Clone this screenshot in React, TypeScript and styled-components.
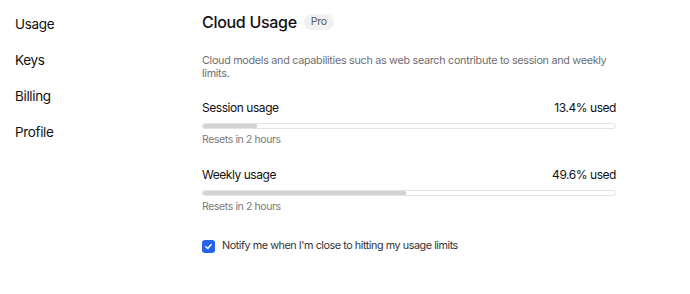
import React from "react";
import styled, { createGlobalStyle } from "styled-components";

const Global = createGlobalStyle`
  html, body { margin: 0; padding: 0; background: #fff; }
  body { font-family: Inter, "Noto Sans", sans-serif; color: #1d1d1f; -webkit-font-smoothing: antialiased; }
`;

const Page = styled.div`
  display: flex;
  width: 690px;
  height: 294px;
  box-sizing: border-box;
`;

const Sidebar = styled.nav`
  width: 202px;
  box-sizing: border-box;
  padding: 14px 0 0 15px;
  display: flex;
  flex-direction: column;
  gap: 16px;
`;

const NavItem = styled.div`
  font-size: 13.5px;
  letter-spacing: -0.35px;
  line-height: 20px;
  color: #111;
`;

const Main = styled.main`
  width: 414px;
  padding-top: 11px;
  display: flex;
  flex-direction: column;
`;

const TitleRow = styled.div`
  display: flex;
  align-items: center;
  gap: 7px;
  height: 22px;
`;

const Title = styled.h1`
  margin: 0;
  font-size: 16px;
  letter-spacing: -0.3px;
  font-weight: 500;
  line-height: 22px;
  color: #111;
`;

const Badge = styled.span`
  font-size: 10.5px;
  letter-spacing: -0.2px;
  line-height: 16px;
  padding: 0 7px;
  border-radius: 8px;
  background: #f1f1f1;
  color: #555;
`;

const Description = styled.p`
  margin: 21px 0 0;
  font-size: 10.8px;
  letter-spacing: -0.3px;
  line-height: 13px;
  color: #6e6e73;
`;

const Metric = styled.div<{ $top: number }>`
  margin-top: ${(p) => p.$top}px;
  display: flex;
  flex-direction: column;
`;

const MetricHead = styled.div`
  display: flex;
  justify-content: space-between;
  font-size: 12px;
  letter-spacing: -0.45px;
  line-height: 16px;
  color: #111;
`;

const Track = styled.div`
  margin-top: 7px;
  height: 6px;
  border-radius: 3px;
  box-sizing: border-box;
  border: 1px solid #e4e4e4;
  background: #fff;
  position: relative;
  overflow: hidden;
`;

const Fill = styled.div`
  position: absolute;
  left: -1px;
  top: -1px;
  bottom: -1px;
  background: #d3d3d3;
  border-radius: 3px;
`;

const Reset = styled.div`
  margin-top: 4px;
  font-size: 10.5px;
  letter-spacing: -0.4px;
  line-height: 14px;
  color: #7a7a7a;
`;

const CheckRow = styled.label`
  margin-top: 25px;
  display: flex;
  align-items: center;
  gap: 7px;
  font-size: 10.8px;
  letter-spacing: -0.45px;
  line-height: 14px;
  color: #333;
`;

const Box = styled.span`
  width: 13px;
  height: 13px;
  border-radius: 3px;
  background: #2563eb;
  display: flex;
  align-items: center;
  justify-content: center;
  flex: none;
`;

function Bar({ pct }: { pct: number }) {
  return (
    <Track>
      <Fill style={{ width: `${pct}%` }} />
    </Track>
  );
}

export default function App() {
  return (
    <>
      <Global />
      <Page>
        <Sidebar>
          <NavItem>Usage</NavItem>
          <NavItem>Keys</NavItem>
          <NavItem>Billing</NavItem>
          <NavItem>Profile</NavItem>
        </Sidebar>
        <Main>
          <TitleRow>
            <Title>Cloud Usage</Title>
            <Badge>Pro</Badge>
          </TitleRow>
          <Description>
            Cloud models and capabilities such as web search contribute to session and weekly limits.
          </Description>
          <Metric $top={20}>
            <MetricHead>
              <span>Session usage</span>
              <span>13.4% used</span>
            </MetricHead>
            <Bar pct={13.4} />
            <Reset>Resets in 2 hours</Reset>
          </Metric>
          <Metric $top={20}>
            <MetricHead>
              <span>Weekly usage</span>
              <span>49.6% used</span>
            </MetricHead>
            <Bar pct={49.6} />
            <Reset>Resets in 2 hours</Reset>
          </Metric>
          <CheckRow>
            <Box>
              <svg width="9" height="9" viewBox="0 0 10 10">
                <path d="M2 5.2 L4.2 7.3 L8 2.8" fill="none" stroke="#fff" strokeWidth="1.6" strokeLinecap="round" strokeLinejoin="round" />
              </svg>
            </Box>
            Notify me when I'm close to hitting my usage limits
          </CheckRow>
        </Main>
      </Page>
    </>
  );
}
